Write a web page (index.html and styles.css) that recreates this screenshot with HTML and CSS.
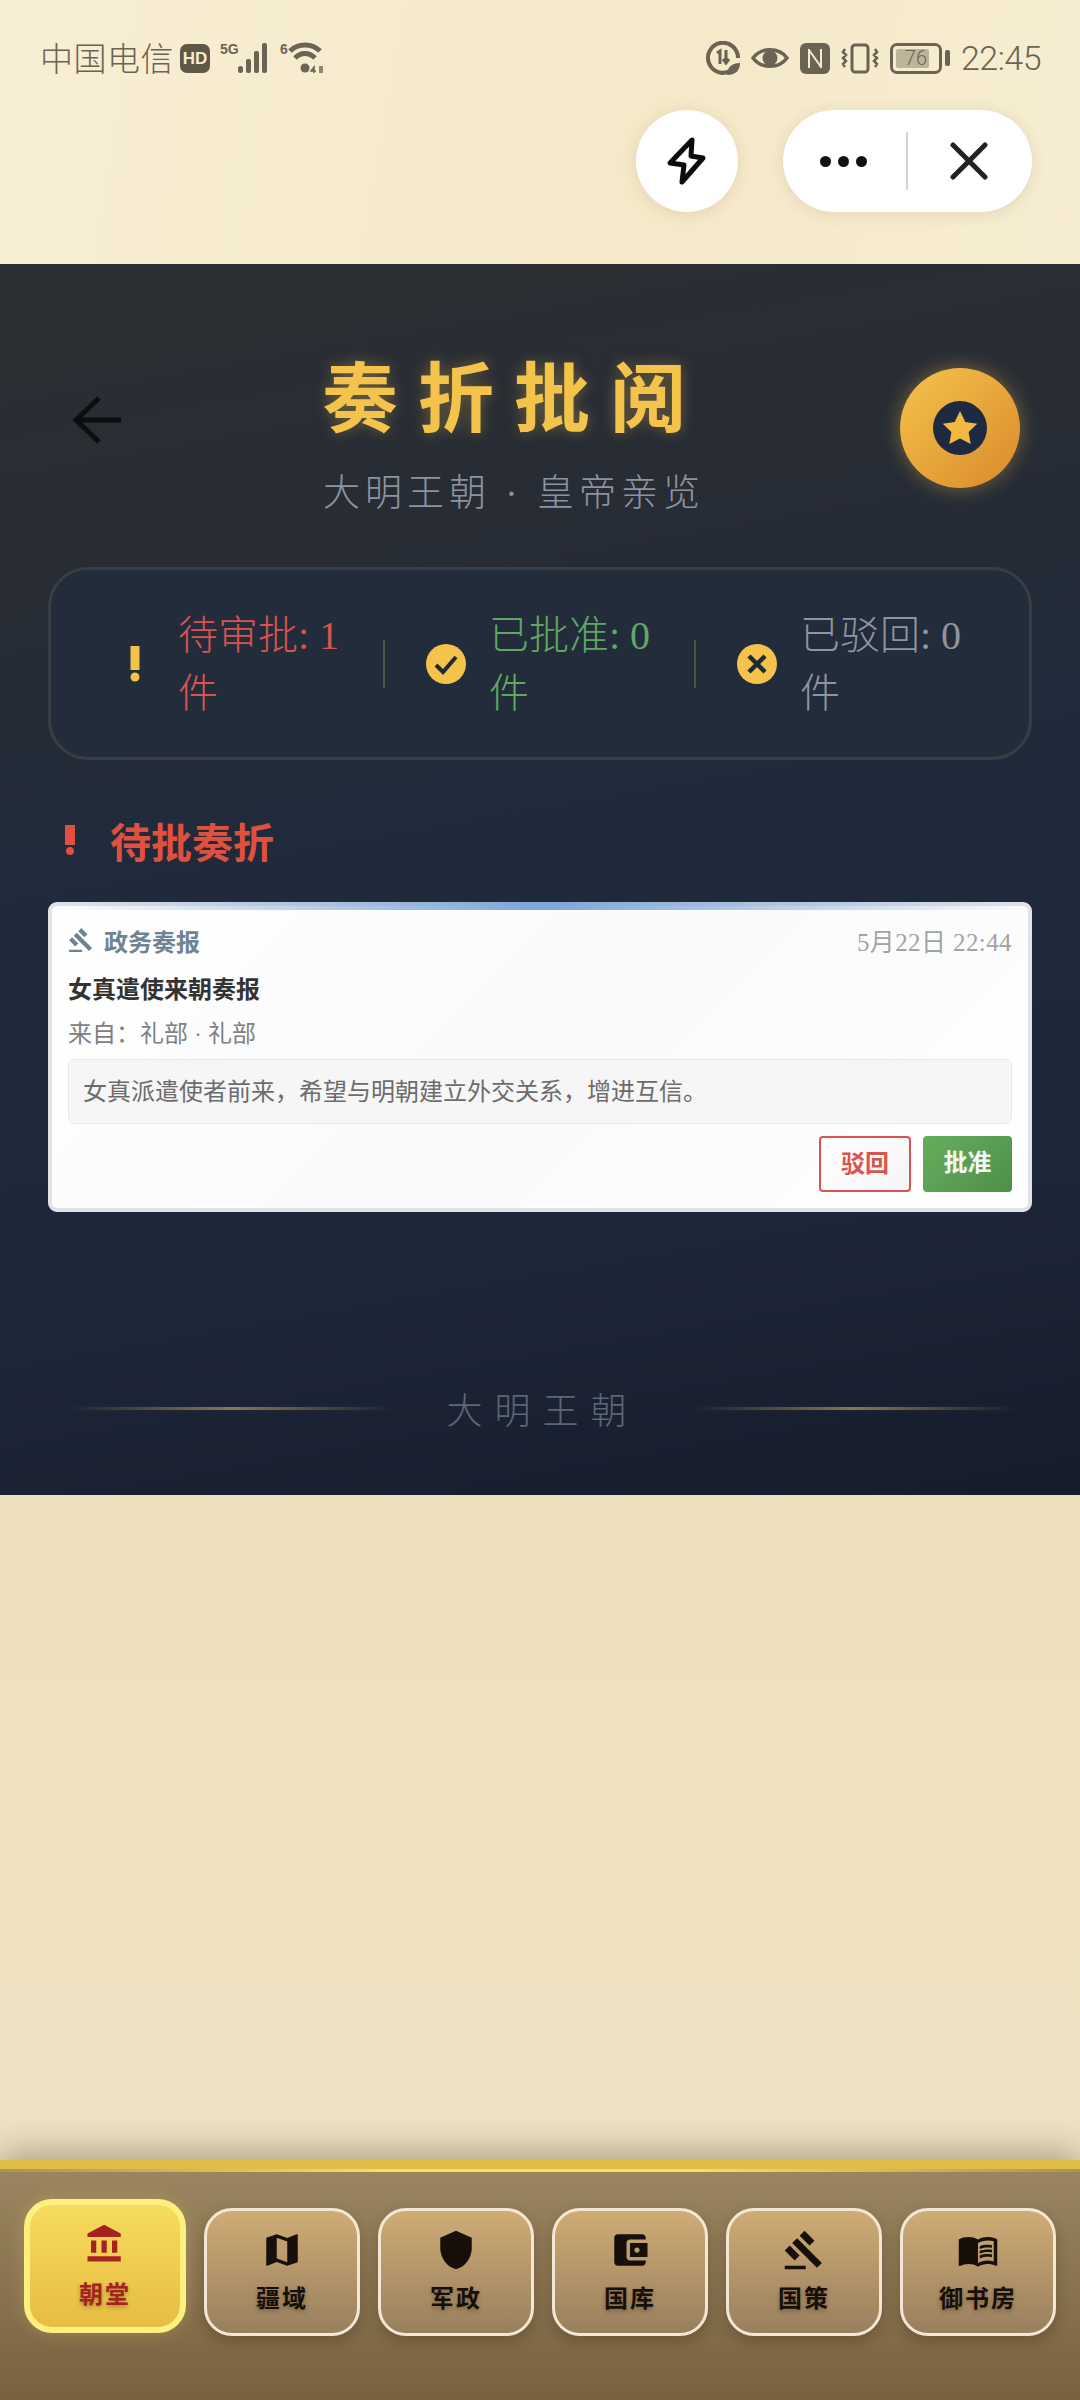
FILE: index.html

```html
<!DOCTYPE html>
<html>
<head>
    <title>奏折批阅</title>
    <meta name="viewport" content="width=device-width, initial-scale=1">
    <link rel="stylesheet" href="styles.css">
</head>
<body>

<div class="page">

    <div class="topArea">
        <div class="statusBar">
            <div class="statusLeft">
                <span class="carrier">中国电信</span>
                <span class="hdBadge">HD</span>
                <svg class="signal" width="52" height="32" viewBox="0 0 52 32">
                    <text x="0" y="12" class="tinyText">5G</text>
                    <rect x="18" y="24" width="5" height="7" rx="2.500"/>
                    <rect x="26" y="17" width="5" height="14" rx="2"/>
                    <rect x="34" y="9" width="5" height="22" rx="2"/>
                    <rect x="42" y="1" width="5" height="30" rx="2"/>
                </svg>
                <svg class="wifi" width="44" height="32" viewBox="0 0 44 32">
                    <text x="0" y="12" class="tinyText">6</text>
                    <path d="M10 9C18 1 32 1 40 9" fill="none" stroke="#6b6353" stroke-width="5"/>
                    <path d="M15 16C21 10 29 10 35 16" fill="none" stroke="#6b6353" stroke-width="5"/>
                    <circle cx="25" cy="26" r="4.500"/>
                    <path d="M34 31v-6l-3 4h5M40 24v7M42 24v7" fill="none" stroke="#6b6353" stroke-width="1.500"/>
                </svg>
            </div>
            <div class="statusRight">
                <svg width="34" height="34" viewBox="0 0 34 34">
                    <path d="M25 29.500A15 15 0 1 1 32 17" fill="none" stroke="#6b6353" stroke-width="4"/>
                    <path d="M11 12l3-2v13M20 9v13M17 18l3 4 3-4" fill="none" stroke="#6b6353" stroke-width="3"/>
                    <path d="M21 34c0-8 5-12 13-12 0 8-5 12-13 12z"/>
                </svg>
                <svg width="38" height="24" viewBox="0 0 38 24">
                    <path d="M2 12C10 1 28 1 36 12C28 23 10 23 2 12z" fill="none" stroke="#6b6353" stroke-width="3.500"/>
                    <circle cx="19" cy="12" r="7.500"/>
                </svg>
                <svg width="30" height="31" viewBox="0 0 30 31">
                    <rect width="30" height="31" rx="6"/>
                    <path d="M9 6v19M21 6v19M9 7l12 17" fill="none" stroke="#f6ebcf" stroke-width="2"/>
                </svg>
                <svg width="38" height="31" viewBox="0 0 38 31">
                    <rect x="11" y="2" width="16" height="27" rx="3" fill="none" stroke="#6b6353" stroke-width="3"/>
                    <path d="M4 6l-2 3 3 3-3 3 3 3-3 3 2 3M34 6l2 3-3 3 3 3-3 3 3 3-2 3" fill="none" stroke="#6b6353" stroke-width="2.500"/>
                </svg>
                <div class="battery">
                    <div class="batteryBody"><span class="batteryFill"></span><span class="batteryNum">76</span></div>
                    <span class="batteryNub"></span>
                </div>
                <span class="clock">22:45</span>
            </div>
        </div>
        <div class="capsuleRow">
            <div class="boltBtn">
                <svg width="44" height="50" viewBox="0 0 44 50">
                    <path d="M27 4L5 27l14 2-2 17 21-24-12-2z" fill="none" stroke="#0c0c0c" stroke-width="5" stroke-linejoin="round"/>
                </svg>
            </div>
            <div class="capsule">
                <div class="dots"><i></i><i></i><i></i></div>
                <div class="capsuleLine"></div>
                <svg width="38" height="38" viewBox="0 0 38 38">
                    <path d="M3 3L35 35M35 3L3 35" stroke="#222" stroke-width="5" stroke-linecap="round"/>
                </svg>
            </div>
        </div>
    </div>

    <div class="panel">
        <div class="panelHead">
            <svg class="backArrow" width="50" height="48" viewBox="0 0 50 48">
                <path d="M49 24H4M27 2L4 24L27 46" fill="none" stroke="#0d0d0d" stroke-width="5"/>
            </svg>
            <div class="headText">
                <h1 class="pageTitle">奏折批阅</h1>
                <div class="pageSub">大明王朝 · 皇帝亲览</div>
            </div>
            <div class="starBtn">
                <svg width="56" height="56" viewBox="0 0 56 56">
                    <circle cx="28" cy="28" r="27" fill="#1e2a42"/>
                    <path d="M28 11l5.300 11 12 1.700-8.700 8.400 2.100 12-10.700-5.700-10.700 5.700 2.100-12-8.700-8.400 12-1.700z" fill="#f2b942"/>
                </svg>
            </div>
        </div>

        <div class="statsCard">
            <div class="stat">
                <svg width="40" height="40" viewBox="0 0 40 40">
                    <path d="M15.500 2h9v24h-9z" fill="#f4c34c"/>
                    <circle cx="20" cy="33" r="4.500" fill="#f4c34c"/>
                </svg>
                <div class="statText red">待审批: 1 件</div>
            </div>
            <div class="statLine"></div>
            <div class="stat">
                <svg width="40" height="40" viewBox="0 0 40 40">
                    <circle cx="20" cy="20" r="20" fill="#f4c34c"/>
                    <path d="M10 21l7 7 13-15" fill="none" stroke="#1f2937" stroke-width="4"/>
                </svg>
                <div class="statText green">已批准: 0 件</div>
            </div>
            <div class="statLine"></div>
            <div class="stat">
                <svg width="40" height="40" viewBox="0 0 40 40">
                    <circle cx="20" cy="20" r="20" fill="#f4c34c"/>
                    <path d="M12 12l16 16M28 12l-16 16" stroke="#1f2937" stroke-width="4.500"/>
                </svg>
                <div class="statText grey">已驳回: 0 件</div>
            </div>
        </div>

        <div class="sectionHead">
            <svg width="12" height="30" viewBox="0 0 12 30">
                <path d="M1 0h10v20H1z" fill="#e0503f"/>
                <circle cx="6" cy="26" r="4" fill="#e0503f"/>
            </svg>
            <span>待批奏折</span>
        </div>

        <div class="memoCard">
            <div class="memoTop">
                <div class="memoType">
                    <svg width="26" height="26" viewBox="0 0 24 24" fill="#6f8493">
                        <path d="M1 21h12v2H1zM5.245 8.070l2.830-2.827 14.140 14.142-2.828 2.828zM12.317 1l5.657 5.656-2.830 2.830-5.654-5.660zM3.825 9.485l5.657 5.657-2.828 2.828-5.657-5.657z"/>
                    </svg>
                    <span>政务奏报</span>
                </div>
                <div class="memoDate">5月22日 22:44</div>
            </div>
            <div class="memoTitle">女真遣使来朝奏报</div>
            <div class="memoFrom">来自：礼部 · 礼部</div>
            <div class="memoBody">女真派遣使者前来，希望与明朝建立外交关系，增进互信。</div>
            <div class="memoActions">
                <div class="btnReject">驳回</div>
                <div class="btnApprove">批准</div>
            </div>
        </div>

        <div class="panelFoot">
            <div class="footLine"></div>
            <div class="footText">大明王朝</div>
            <div class="footLine"></div>
        </div>
    </div>

    <div class="spacer"></div>

    <div class="navBar">
        <div class="navItem active">
            <svg width="42" height="42" viewBox="0 0 24 24"><path d="M4 10v7h3v-7H4zm6 0v7h3v-7h-3zM2 22h19v-3H2v3zm14-12v7h3v-7h-3zm-4.500-9L2 6v2h19V6l-9.500-5z"/></svg>
            <span>朝堂</span>
        </div>
        <div class="navItem">
            <svg width="42" height="42" viewBox="0 0 24 24"><path d="M20.500 3l-.16.03L15 5.100 9 3 3.360 4.900c-.21.07-.36.25-.36.48V20.500c0 .28.22.5.5.5l.16-.03L9 18.900l6 2.100 5.640-1.900c.21-.07.36-.25.36-.48V3.500c0-.28-.22-.5-.5-.5zM15 19l-6-2.110V5l6 2.110V19z"/></svg>
            <span>疆域</span>
        </div>
        <div class="navItem">
            <svg width="42" height="42" viewBox="0 0 24 24"><path d="M12 1L3 5v6c0 5.550 3.840 10.740 9 12 5.160-1.260 9-6.450 9-12V5l-9-4z"/></svg>
            <span>军政</span>
        </div>
        <div class="navItem">
            <svg width="42" height="42" viewBox="0 0 24 24"><path d="M21 18v1c0 1.100-.9 2-2 2H5c-1.110 0-2-.9-2-2V5c0-1.100.89-2 2-2h14c1.100 0 2 .9 2 2v1h-9c-1.110 0-2 .9-2 2v8c0 1.100.89 2 2 2h9zm-9-2h10V8H12v8zm4-2.500c-.83 0-1.500-.67-1.500-1.500s.67-1.500 1.500-1.500 1.500.67 1.500 1.500-.67 1.500-1.500 1.500z"/></svg>
            <span>国库</span>
        </div>
        <div class="navItem">
            <svg width="42" height="42" viewBox="0 0 24 24"><path d="M1 21h12v2H1zM5.245 8.070l2.830-2.827 14.140 14.142-2.828 2.828zM12.317 1l5.657 5.656-2.830 2.830-5.654-5.660zM3.825 9.485l5.657 5.657-2.828 2.828-5.657-5.657z"/></svg>
            <span>国策</span>
        </div>
        <div class="navItem">
            <svg width="42" height="42" viewBox="0 0 24 24"><path d="M21 5c-1.110-.35-2.330-.5-3.500-.5-1.950 0-4.050.4-5.500 1.500-1.450-1.100-3.550-1.500-5.500-1.500S2.450 4.900 1 6v14.650c0 .25.25.5.5.5.1 0 .15-.05.25-.05C3.100 20.450 5.050 20 6.500 20c1.950 0 4.050.4 5.500 1.500 1.350-.85 3.800-1.500 5.500-1.500 1.650 0 3.350.3 4.750 1.050.1.050.15.050.25.050.25 0 .5-.25.5-.5V6c-.6-.45-1.250-.75-2-1zm0 13.500c-1.100-.35-2.300-.5-3.500-.5-1.700 0-4.150.65-5.500 1.500V8c1.350-.85 3.800-1.500 5.500-1.500 1.200 0 2.400.15 3.500.5v11.500z"/><path d="M17.500 10.500c.88 0 1.730.09 2.500.26V9.240c-.79-.15-1.640-.24-2.500-.24-1.700 0-3.240.29-4.500.83v1.660c1.130-.64 2.700-.99 4.500-.99zM13 12.490v1.660c1.130-.64 2.700-.99 4.500-.99.88 0 1.730.09 2.500.26V11.900c-.79-.15-1.640-.24-2.500-.24-1.700 0-3.240.3-4.500.83zM17.500 14.330c-1.700 0-3.240.29-4.500.83v1.660c1.130-.64 2.700-.99 4.500-.99.88 0 1.730.09 2.500.26v-1.520c-.79-.16-1.640-.24-2.500-.24z"/></svg>
            <span>御书房</span>
        </div>
    </div>

</div>

</body>
</html>
```

FILE: styles.css

```css
* { box-sizing: border-box; }
body { margin: 0; font-family: "Liberation Serif", "Noto Sans CJK SC", serif; }
.page { width: 1080px; height: 2400px; display: flex; flex-direction: column; background: linear-gradient(180deg, #f1e2c3 0%, #f0dfbd 60%, #eee3c4 100%); }

.topArea { height: 264px; flex: none; background: linear-gradient(100deg, #f8eed4, #f5e9c9 60%, #f7edd2); padding: 0 39px 0 40px; }
.statusBar { height: 110px; display: flex; justify-content: space-between; align-items: flex-start; padding-top: 40px; color: #6b6353; font-family: "Noto Sans CJK SC", sans-serif; }
.statusBar svg { fill: #6b6353; flex: none; }
.statusLeft, .statusRight { display: flex; align-items: center; height: 36px; }
.carrier { font-size: 33px; font-weight: 300; letter-spacing: 0.5px; line-height: 36px; margin-top: -2px; }
.hdBadge { width: 30px; height: 29px; margin-left: 6px; background: #5f5848; color: #f6ebcf; border-radius: 7px; font: bold 17px/29px "Liberation Sans", sans-serif; text-align: center; }
.signal { margin-left: 10px; }
.wifi { margin-left: 8px; }
.tinyText { font: bold 14px "Liberation Sans", sans-serif; }
.statusRight { gap: 11px; }
.battery { display: flex; align-items: center; gap: 3px; }
.batteryBody { position: relative; width: 52px; height: 31px; border: 3px solid #6b6353; border-radius: 7px; }
.batteryFill { display: block; width: 33px; height: 19px; margin: 3px; background: #bdb49c; border-radius: 2px; }
.batteryNum { position: absolute; left: 0; right: 0; top: 0; text-align: center; font: 300 20px/25px Roboto, sans-serif; }
.batteryNub { width: 5px; height: 16px; background: #6b6353; border-radius: 2px; }
.clock { font: 300 34px/36px Roboto, sans-serif; letter-spacing: -0.5px; }

.capsuleRow { display: flex; justify-content: flex-end; gap: 45px; padding-right: 9px; }
.boltBtn { width: 102px; height: 102px; border-radius: 51px; background: #fff; display: flex; align-items: center; justify-content: center; box-shadow: 0 2px 16px rgba(150, 130, 80, 0.2); }
.capsule { width: 249px; height: 102px; border-radius: 51px; background: #fff; display: flex; align-items: center; padding-left: 37px; box-shadow: 0 2px 16px rgba(150, 130, 80, 0.2); }
.capsule svg { margin-left: 42px; }
.dots { display: flex; gap: 7px; width: 50px; }
.dots i { display: block; width: 11px; height: 11px; border-radius: 50%; background: #111; }
.capsuleLine { width: 2px; height: 58px; margin-left: 36px; background: #d4d4d4; }

.panel { height: 1231px; flex: none; padding: 80px 48px 0; background: linear-gradient(170deg, #2c2f33 0%, #272c35 25%, #1f2a3b 45%, #1e2738 75%, #151c2c 100%); }
.panelHead { display: flex; align-items: flex-start; height: 223px; }
.backArrow { margin: 52px 0 0 24px; flex: none; }
.headText { flex: 1; text-align: center; padding: 8px 0 0 6px; }
.pageTitle { margin: 0; font-size: 76px; line-height: 96px; font-weight: bold; letter-spacing: 20px; color: #f4c34c; text-shadow: 0 0 14px rgba(244, 195, 76, 0.35); }
.pageSub { margin-top: 21px; font-size: 37px; line-height: 50px; font-weight: 300; letter-spacing: 5px; color: #8c94a1; }
.starBtn { width: 120px; height: 120px; margin: 24px 12px 0 0; flex: none; border-radius: 50%; background: linear-gradient(135deg, #f5c34b, #d98a2d); display: flex; align-items: center; justify-content: center; box-shadow: 0 0 20px rgba(244, 190, 70, 0.4); }

.statsCard { height: 193px; display: flex; align-items: center; padding: 0 23px; background: #232c3b; border: 3px solid #393e43; border-radius: 40px; }
.stat { width: 309px; flex: none; display: flex; align-items: center; gap: 23px; padding-left: 41px; }
.stat svg { flex: none; }
.statLine { width: 2px; height: 48px; flex: none; background: #4e5148; }
.statText { width: 185px; padding-top: 3px; font-size: 40px; line-height: 58px; font-weight: 300; }
.red { color: #d9534f; }
.green { color: #5fa862; }
.grey { color: #8f959e; }

.sectionHead { height: 60px; margin-top: 50px; padding-left: 16px; display: flex; align-items: center; gap: 34px; color: #e0503f; font-size: 41px; font-weight: bold; }

.memoCard { position: relative; height: 310px; margin-top: 32px; padding: 14px 16px 16px; background: linear-gradient(135deg, #fff, #f9fafb 50%, #fff); border: 4px solid #e1e3e8; border-radius: 9px; }
.memoCard::before { content: ""; position: absolute; left: -4px; right: -4px; top: -4px; height: 8px; border-radius: 9px 9px 0 0; background: linear-gradient(90deg, rgba(125, 165, 215, 0), #7fa6d6 50%, rgba(125, 165, 215, 0)); }
.memoTop { display: flex; justify-content: space-between; align-items: center; height: 40px; }
.memoType { display: flex; align-items: center; gap: 10px; color: #6f8493; font-size: 24px; font-weight: bold; }
.memoDate { color: #a3a3a3; font-size: 25px; letter-spacing: 0.4px; }
.memoTitle { height: 44px; margin-top: 8px; line-height: 44px; color: #333; font-size: 24px; font-weight: bold; }
.memoFrom { height: 42px; margin-top: 1px; line-height: 42px; color: #808080; font-size: 24px; }
.memoBody { height: 65px; margin-top: 4px; padding: 0 14px; line-height: 64px; color: #6c6c6c; font-size: 24px; background: #f6f6f7; border: 1px solid #e9e9ec; border-radius: 6px; }
.memoActions { display: flex; justify-content: flex-end; gap: 12px; margin-top: 12px; }
.btnReject, .btnApprove { height: 56px; border-radius: 4px; font-size: 24px; font-weight: bold; text-align: center; line-height: 52px; }
.btnReject { width: 92px; border: 2px solid #d9534f; color: #d9534f; background: linear-gradient(135deg, #fff, #f5f5f5); }
.btnApprove { width: 89px; color: #f4f8f2; background: linear-gradient(135deg, #66ad5e, #4f8f49); line-height: 54px; }

.panelFoot { display: flex; align-items: center; margin: 170px 17px 0 22px; height: 52px; }
.footLine { flex: 1; height: 3px; background: linear-gradient(90deg, rgba(190, 165, 100, 0), rgba(190, 165, 100, 0.65) 50%, rgba(190, 165, 100, 0)); box-shadow: 0 0 6px rgba(120, 110, 70, 0.1); }
.footText { margin: 0 54px; font-size: 36px; font-weight: 300; letter-spacing: 12px; color: #5d6675; }

.spacer { flex: 1; }

.navBar { position: relative; height: 240px; flex: none; display: flex; align-items: flex-start; gap: 18px; padding: 48px 24px 0; background: linear-gradient(180deg, #e0bc48 0, #e0bc48 12px, #9a8560 12px, #78613f 100%); box-shadow: 0 -8px 32px rgba(30, 25, 10, 0.32); }
.navBar::before { content: ""; position: absolute; left: 0; right: 0; top: 9px; height: 3px; background: linear-gradient(90deg, #a89550, #f8de5a 35%, #f8de5a 65%, #a89550); }
.navItem { width: 156px; height: 128px; flex: none; display: flex; flex-direction: column; align-items: center; color: #17100a; background: linear-gradient(180deg, #cfac76, #987f5d); border: 3px solid #f3e6d3; border-radius: 28px; box-shadow: 0 6px 14px rgba(60, 40, 20, 0.3); padding-top: 18px; }
.navItem svg { fill: #17100a; flex: none; }
.navItem span { margin-top: 10px; font-size: 24px; line-height: 36px; font-weight: bold; letter-spacing: 2px; text-shadow: 0 2px 4px rgba(40, 25, 10, 0.35); }
.navItem.active { width: 162px; height: 134px; margin-top: -9px; color: #a5221f; background: linear-gradient(180deg, #f7dc5c, #e6bd42); border: 6px solid #fdef80; box-shadow: 0 0 18px rgba(240, 215, 90, 0.25); padding-top: 18px; }
.navItem.active svg { fill: #a5221f; }
.navItem.active span { margin-top: 12px; }
```
